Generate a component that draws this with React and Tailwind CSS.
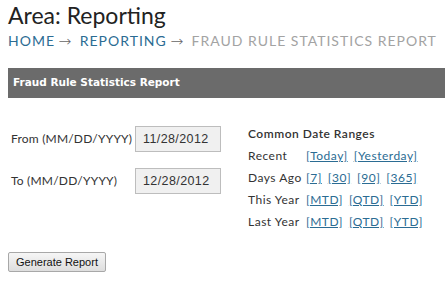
import React from "react";

const ranges = [
    { label: "Recent", links: ["[Today]", "[Yesterday]"] },
    { label: "Days Ago", links: ["[7]", "[30]", "[90]", "[365]"] },
    { label: "This Year", links: ["[MTD]", "[QTD]", "[YTD]"] },
    { label: "Last Year", links: ["[MTD]", "[QTD]", "[YTD]"] },
];

const DateField = ({ label, value }) => (
    <div className="flex items-center h-[26px]">
        <label className="w-[124px] text-[12px] text-[#333] tracking-[0.2px]">{label}</label>
        <input
            type="text"
            defaultValue={value}
            className="w-[86px] h-[26px] border border-[#bdbdbd] bg-[#f0f0f0] pl-[7px] pr-[2px] text-[12.5px] tracking-[0.4px] text-[#333] font-['Liberation_Sans',sans-serif] outline-none"
        />
    </div>
);

const Arrow = () => (
    <span className="text-[#666] text-[14px] tracking-normal font-['DejaVu_Sans',sans-serif] font-extralight ml-[4px] mr-[9px] scale-x-110">
        →
    </span>
);

const App = () => {
    return (
        <div className="w-[445px] h-[290px] bg-white pl-[8px] font-['Lato',sans-serif] overflow-hidden">
            <h1 className="pt-[1px] text-[23px] leading-[28px] text-[#222]">Area: Reporting</h1>
            <div className="mt-[4px] text-[14px] leading-[16px] tracking-[1px] flex items-center">
                <span className="text-[#2b6c93]">HOME</span>
                <Arrow />
                <span className="text-[#2b6c93]">REPORTING</span>
                <Arrow />
                <span className="text-[#a3a3a3]">FRAUD RULE STATISTICS REPORT</span>
            </div>

            {/* Report panel */}
            <div className="mt-[19px] h-[30px] bg-[#6b6b6b] flex items-center pl-[5px]">
                <span className="text-white font-bold text-[10.5px] font-['DejaVu_Sans',sans-serif]">
                    Fraud Rule Statistics Report
                </span>
            </div>

            <div className="flex pl-[3px] pt-[28px]">
                <div className="flex flex-col gap-[16px] w-[237px]">
                    <DateField label="From (MM/DD/YYYY)" value="11/28/2012" />
                    <DateField label="To (MM/DD/YYYY)" value="12/28/2012" />
                </div>
                <div className="-mt-[3px] text-[12px] text-[#333] tracking-[0.5px]">
                    <div className="font-semibold leading-[22px]">Common Date Ranges</div>
                    {ranges.map((r) => (
                        <div key={r.label} className="flex leading-[22px]">
                            <span className="w-[58px]">{r.label}</span>
                            <span className="flex gap-[6px]">
                                {r.links.map((l, i) => (
                                    <a key={i} href="#" className="text-[#2b6c93] underline">{l}</a>
                                ))}
                            </span>
                        </div>
                    ))}
                </div>
            </div>

            <button className="mt-[19px] h-[20px] px-[7px] border border-[#a8a8a8] rounded-[2px] bg-gradient-to-b from-[#f6f6f6] to-[#dedede] text-[11px] text-[#111] font-['Liberation_Sans',sans-serif]">
                Generate Report
            </button>
        </div>
    );
};

export default App;
